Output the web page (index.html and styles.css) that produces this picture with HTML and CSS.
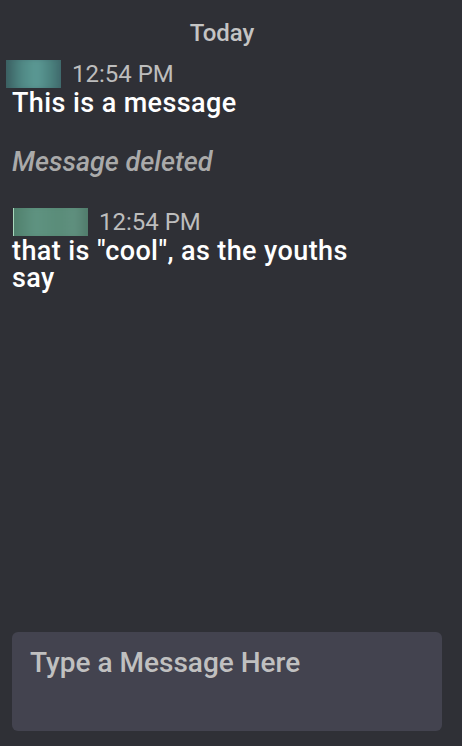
FILE: index.html
```html
<!DOCTYPE html>
<html>
<head>
    <title>Chat</title>
    <link rel="stylesheet" href="styles.css">
</head>
<body>
    <div class="chat">
        <div class="mensajes">
            <div class="dia">Today</div>

            <div class="mensaje">
                <div class="cabecera">
                    <span class="autor autor-uno"></span>
                    <span class="hora">12:54 PM</span>
                </div>
                <div class="texto">This is a message</div>
            </div>

            <div class="borrado">Message deleted</div>

            <div class="mensaje">
                <div class="cabecera">
                    <span class="autor autor-dos"></span>
                    <span class="hora">12:54 PM</span>
                </div>
                <div class="texto">that is "cool", as the youths<br>say</div>
            </div>
        </div>

        <div class="entrada">
            <textarea placeholder="Type a Message Here"></textarea>
        </div>
    </div>
</body>
</html>
```

FILE: styles.css
```css
body {
    font-family: Roboto, 'Liberation Sans', sans-serif;
    background: #2f3036;
    margin: 0;
    padding: 0;
}

.chat {
    width: 444px;
    height: 746px;
    display: flex;
    flex-direction: column;
}

.mensajes {
    flex: 1;
    padding: 0 12px;
}

.dia {
    text-align: center;
    color: #c4c4c4;
    font-size: 24px;
    font-weight: 500;
    padding-top: 21px;
    line-height: 24px;
}

.mensaje {
    margin-top: 15px;
}
.borrado + .mensaje {
    margin-top: 32px;
}

.cabecera {
    display: flex;
    align-items: center;
    gap: 11px;
    height: 28px;
}

.autor {
    display: block;
    position: relative;
    height: 28px;
    overflow: hidden;
}
.autor::before {
    content: '';
    position: absolute;
    top: -3px;
    left: -3px;
    right: -3px;
    bottom: -3px;
    filter: blur(3px);
}
.autor-uno {
    width: 55px;
    margin-left: -6px;
    background: #3e6064;
}
.autor-uno::before {
    background: linear-gradient(90deg, #36565a, #4f8884 30%, #5c9a95 55%, #4a807d 80%, #3c6266);
}
.autor-dos {
    width: 74px;
    margin-left: 1px;
    background: #4f7c6a;
    border-left: 1px solid #a8d8bc;
}
.autor-dos::before {
    background: linear-gradient(90deg, #4e7d6a, #5f9381 30%, #5a8c79 60%, #60907f 80%, #4d7767);
}

.hora {
    color: #bdbdbd;
    font-size: 24px;
    line-height: 28px;
}

.texto {
    color: #fff;
    font-size: 27px;
    font-weight: 500;
    line-height: 27px;
    letter-spacing: 0.4px;
    margin-top: 2px;
}

.borrado {
    margin-top: 32px;
    color: #aaaaaa;
    font-style: italic;
    font-size: 27px;
    font-weight: 500;
    line-height: 27px;
}

.entrada {
    padding: 0 2px 15px 12px;
}

.entrada textarea {
    display: block;
    width: 100%;
    height: 99px;
    box-sizing: border-box;
    background: #43434f;
    border: none;
    border-radius: 6px;
    padding: 17px 18px;
    font-family: Roboto, 'Liberation Sans', sans-serif;
    font-size: 28px;
    font-weight: 500;
    line-height: 28px;
    color: #fff;
    resize: none;
    outline: none;
}
.entrada textarea::placeholder {
    color: #c0c0c0;
}
```
